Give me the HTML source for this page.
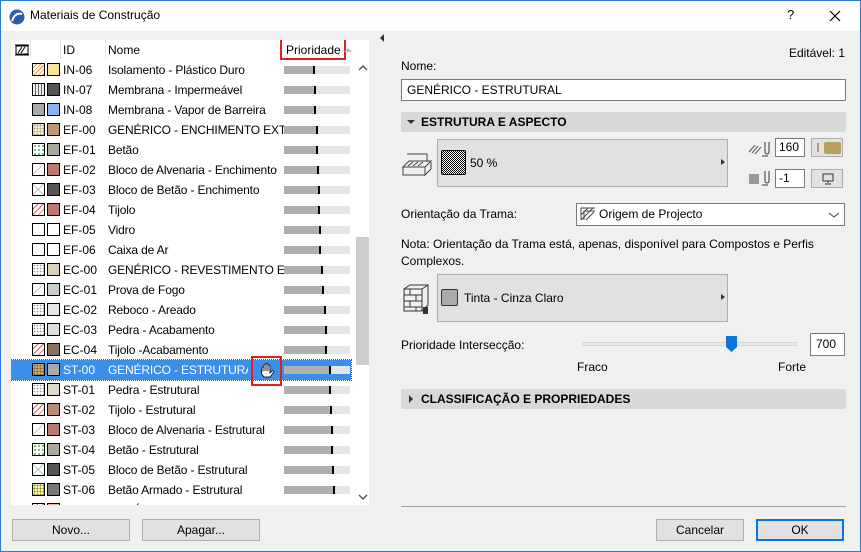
<!DOCTYPE html>
<html><head><meta charset="utf-8"><style>
*{box-sizing:border-box;margin:0;padding:0}
body{width:861px;height:552px;overflow:hidden;background:#f0f0f0;font-family:"Segoe UI","Liberation Sans",sans-serif;font-size:12px;color:#000;position:relative}
.a{position:absolute}
.win{position:absolute;left:0;top:0;width:861px;height:552px;border:1px solid #2b78d6;border-top:none}
.title{position:absolute;left:0;top:0;width:861px;height:31px;background:#fff;border-top:1px solid #2b78d6}
.list{position:absolute;left:11px;top:40px;width:358px;height:465px;background:#fff;overflow:hidden}
.row{position:absolute;left:0;width:345px;height:20px}
.row .p{position:absolute;left:21px;top:3px;width:13px;height:13px;border:1px solid #000}
.row .c{position:absolute;left:36px;top:3px;width:13px;height:13px;border:1px solid #000}
.row .id{position:absolute;left:52px;top:3px}
.row .n{position:absolute;left:97px;top:3px;width:176px;white-space:nowrap;overflow:hidden;letter-spacing:-0.15px}
.row .b{position:absolute;left:273px;top:6px;width:66px;height:8px;background:#e4e4e4}
.row .b i{position:absolute;left:0;top:0;height:8px;background:#b0b0b0;border-right:2px solid #000}
.sel{background:#3c8fe8;color:#fff;outline:1px dotted #1a5fb0}
.btn{position:absolute;height:22px;background:#e1e1e1;border:1px solid #adadad;text-align:center;line-height:20px}
.hd{position:absolute;left:401px;width:445px;height:20px;background:#d8d8d8;border-radius:2px;font-weight:bold;line-height:20px;padding-left:20px}
.inp{position:absolute;background:#fff;border:1px solid #7a7a7a;padding-left:5px;line-height:20px}
.h1{background:repeating-linear-gradient(135deg,#fff 0 2px,#e89a30 2px 3px)}
.h2{background:repeating-linear-gradient(90deg,#eee 0 2px,#666 2px 3px)}
.h3{background:repeating-linear-gradient(135deg,#fff 0 3px,#e06060 3px 4px)}
.h4{background:linear-gradient(135deg,#fff 45%,#e08050 47%,#fff 52%)}
.dt{background:radial-gradient(#999 0.6px,#fff 1px) 0 0/3px 3px}
.dg{background:radial-gradient(#4a4 0.7px,#fff 1.2px) 0 0/4px 4px}
.dy{background:radial-gradient(#880 0.8px,#ffc 1.2px) 0 0/3px 3px}
.xg{background:linear-gradient(45deg,#fff 46%,#4a4 48%,#fff 52%),linear-gradient(135deg,#fff 46%,#4a4 48%,#fff 52%);background-blend-mode:multiply}
.bg{background:radial-gradient(#b09a70 0.7px,#f0e8d8 1px) 0 0/3px 3px}
.chk{background:repeating-conic-gradient(#000 0 25%,#fff 0 50%) 0 0/2px 2px}
</style></head><body>
<div class="title">
 <svg class="a" style="left:9px;top:8px" width="16" height="16"><circle cx="8" cy="8" r="7.5" fill="#2a5db0"/><path d="M3 12 Q6 3 13 5" stroke="#fff" stroke-width="2" fill="none"/></svg>
 <div class="a" style="left:30px;top:7px;font-size:12px">Materiais de Construção</div>
 <div class="a" style="left:787px;top:6px;font-size:13px">?</div>
 <svg class="a" style="left:829px;top:9px" width="12" height="12"><path d="M1 1L11 11M11 1L1 11" stroke="#000" stroke-width="1.2"/></svg>
</div>
<div class="win"></div>

<div class="list">
 <svg class="a" style="left:4px;top:4px" width="14" height="12"><rect x="1" y="2" width="12" height="8" fill="none" stroke="#000"/><path d="M0 1h14M0 11h14M3 9l4-6M6 9l4-6" stroke="#000"/></svg>
 <div class="a" style="left:19px;top:0;width:1px;height:19px;background:#e5e5e5"></div>
 <div class="a" style="left:49px;top:0;width:1px;height:19px;background:#e5e5e5"></div>
 <div class="a" style="left:94px;top:0;width:1px;height:19px;background:#e5e5e5"></div>
 <div class="a" style="left:52px;top:3px">ID</div>
 <div class="a" style="left:97px;top:3px">Nome</div>
 <div class="a" style="left:269px;top:-3px;width:66px;height:23px;border:2px solid #e02020"></div>
 <div class="a" style="left:275px;top:3px">Prioridade</div>
 <div class="a" style="left:333px;top:8px;width:0;height:0;border:4px solid transparent;border-bottom-color:#bbb;border-top:none"></div>
 <div class="a" style="left:345px;top:19px;width:13px;height:446px;background:#fff"></div>
 <div class="a" style="left:345px;top:197px;width:13px;height:128px;background:#cdcdcd"></div>
 <svg class="a" style="left:347px;top:24px" width="10" height="8"><path d="M1 6l4-4 4 4" stroke="#555" stroke-width="1.5" fill="none"/></svg>
 <svg class="a" style="left:347px;top:453px" width="10" height="8"><path d="M1 2l4 4 4-4" stroke="#555" stroke-width="1.5" fill="none"/></svg>

 <div class="row" style="top:20px"><span class="p h1"></span><span class="c" style="background:#f5e29c"></span><span class="id">IN-06</span><span class="n">Isolamento - Plástico Duro</span><span class="b"><i style="width:31px"></i></span></div>
 <div class="row" style="top:40px"><span class="p h2"></span><span class="c" style="background:#555"></span><span class="id">IN-07</span><span class="n">Membrana - Impermeável</span><span class="b"><i style="width:32px"></i></span></div>
 <div class="row" style="top:60px"><span class="p" style="background:#aaa"></span><span class="c" style="background:#8ab0f0"></span><span class="id">IN-08</span><span class="n">Membrana - Vapor de Barreira</span><span class="b"><i style="width:32px"></i></span></div>
 <div class="row" style="top:80px"><span class="p bg"></span><span class="c" style="background:#b8977a"></span><span class="id">EF-00</span><span class="n">GENÉRICO - ENCHIMENTO EXTERIOR</span><span class="b"><i style="width:34px"></i></span></div>
 <div class="row" style="top:100px"><span class="p dg"></span><span class="c" style="background:#a8a89c"></span><span class="id">EF-01</span><span class="n">Betão</span><span class="b"><i style="width:34px"></i></span></div>
 <div class="row" style="top:120px"><span class="p h4"></span><span class="c" style="background:#b87a70"></span><span class="id">EF-02</span><span class="n">Bloco de Alvenaria - Enchimento</span><span class="b"><i style="width:35px"></i></span></div>
 <div class="row" style="top:140px"><span class="p xg"></span><span class="c" style="background:#555"></span><span class="id">EF-03</span><span class="n">Bloco de Betão - Enchimento</span><span class="b"><i style="width:36px"></i></span></div>
 <div class="row" style="top:160px"><span class="p h3"></span><span class="c" style="background:#b87a70"></span><span class="id">EF-04</span><span class="n">Tijolo</span><span class="b"><i style="width:36px"></i></span></div>
 <div class="row" style="top:180px"><span class="p"></span><span class="c"></span><span class="id">EF-05</span><span class="n">Vidro</span><span class="b"><i style="width:37px"></i></span></div>
 <div class="row" style="top:200px"><span class="p"></span><span class="c"></span><span class="id">EF-06</span><span class="n">Caixa de Ar</span><span class="b"><i style="width:37px"></i></span></div>
 <div class="row" style="top:220px"><span class="p dt"></span><span class="c" style="background:#d8d0b8"></span><span class="id">EC-00</span><span class="n">GENÉRICO - REVESTIMENTO EXTERIOR</span><span class="b"><i style="width:39px"></i></span></div>
 <div class="row" style="top:240px"><span class="p h4"></span><span class="c" style="background:#ccc"></span><span class="id">EC-01</span><span class="n">Prova de Fogo</span><span class="b"><i style="width:40px"></i></span></div>
 <div class="row" style="top:260px"><span class="p dt"></span><span class="c" style="background:#e4e4e4"></span><span class="id">EC-02</span><span class="n">Reboco - Areado</span><span class="b"><i style="width:42px"></i></span></div>
 <div class="row" style="top:280px"><span class="p dt"></span><span class="c" style="background:#ddd"></span><span class="id">EC-03</span><span class="n">Pedra - Acabamento</span><span class="b"><i style="width:43px"></i></span></div>
 <div class="row" style="top:300px"><span class="p h3"></span><span class="c" style="background:#8b7060"></span><span class="id">EC-04</span><span class="n">Tijolo -Acabamento</span><span class="b"><i style="width:43px"></i></span></div>
 <div class="row sel" style="top:320px;width:340px"><span class="p bg" style="background:radial-gradient(#806030 0.8px,#c8b080 1.2px) 0 0/3px 3px"></span><span class="c" style="background:#aaa"></span><span class="id">ST-00</span><span class="n" style="width:140px">GENÉRICO - ESTRUTURAL</span><span class="b" style="width:66px"><i style="width:47px"></i></span></div>
 <div class="row" style="top:340px"><span class="p dt"></span><span class="c" style="background:#e0d8c8"></span><span class="id">ST-01</span><span class="n">Pedra - Estrutural</span><span class="b"><i style="width:47px"></i></span></div>
 <div class="row" style="top:360px"><span class="p h3"></span><span class="c" style="background:#b88a78"></span><span class="id">ST-02</span><span class="n">Tijolo - Estrutural</span><span class="b"><i style="width:48px"></i></span></div>
 <div class="row" style="top:380px"><span class="p h4"></span><span class="c" style="background:#b87a70"></span><span class="id">ST-03</span><span class="n">Bloco de Alvenaria - Estrutural</span><span class="b"><i style="width:49px"></i></span></div>
 <div class="row" style="top:400px"><span class="p dg"></span><span class="c" style="background:#a8a89c"></span><span class="id">ST-04</span><span class="n">Betão - Estrutural</span><span class="b"><i style="width:49px"></i></span></div>
 <div class="row" style="top:420px"><span class="p xg"></span><span class="c" style="background:#555"></span><span class="id">ST-05</span><span class="n">Bloco de Betão - Estrutural</span><span class="b"><i style="width:50px"></i></span></div>
 <div class="row" style="top:440px"><span class="p dy"></span><span class="c" style="background:#777"></span><span class="id">ST-06</span><span class="n">Betão Armado - Estrutural</span><span class="b"><i style="width:51px"></i></span></div>
 <div class="row" style="top:460px"><span class="p h3"></span><span class="c" style="background:#f5b090"></span><span class="id">EM-00</span><span class="n">GENÉRICO - MEMBRANA EXTERIOR</span><span class="b"><i style="width:53px"></i></span></div>
</div>
<div class="a" style="left:251px;top:356px;width:31px;height:30px;border:2px solid #e02020"></div>
<svg class="a" style="left:258px;top:363px" width="18" height="17"><path d="M4 9V5a1 1 0 0 1 2 0v3V2a1 1 0 0 1 2 0v6V1.5a1 1 0 0 1 2 0V8V3a1 1 0 0 1 2 0v7l2-2a1 1 0 0 1 1.5 1.5L12 14H6L3.5 11V7a1 1 0 0 1 .5-1" fill="#fff" stroke="#222" stroke-width="1"/></svg>

<div class="btn" style="left:12px;top:519px;width:118px">Novo...</div>
<div class="btn" style="left:142px;top:519px;width:118px">Apagar...</div>

<div class="a" style="left:380px;top:34px;width:0;height:0;border:4px solid transparent;border-right:4px solid #333;border-left:none"></div>

<div class="a" style="right:16px;top:46px">Editável: 1</div>
<div class="a" style="left:401px;top:59px">Nome:</div>
<div class="inp" style="left:401px;top:79px;width:445px;height:22px">GENÉRICO - ESTRUTURAL</div>

<div class="hd" style="top:112px"><span class="a" style="left:6px;top:8px;border:4px solid transparent;border-top:4px solid #333;border-bottom:none"></span>ESTRUTURA E ASPECTO</div>

<svg class="a" style="left:402px;top:151px" width="30" height="26"><path d="M5 3h20v8M1 16l6-6h22l-6 6zM1 16h22v8H1zM23 16v8l6-6v-7" fill="none" stroke="#444"/><path d="M6 15l5-4M11 15l5-4M16 15l5-4" stroke="#444"/></svg>
<div class="a" style="left:437px;top:139px;width:291px;height:48px;background:#e1e1e1;border:1px solid #adadad"></div>
<div class="a chk" style="left:441px;top:150px;width:25px;height:25px;border:1px solid #000;border-radius:2px"></div>
<div class="a" style="left:470px;top:156px">50 %</div>
<div class="a" style="left:721px;top:159px;border:3px solid transparent;border-left:4px solid #333;border-right:none"></div>

<svg class="a" style="left:748px;top:140px" width="26" height="18"><path d="M1 12l6-7M4 13l6-7M7 14l6-7" stroke="#555"/><path d="M17 2v10a2 2 0 0 0 4 0V2M14 16h6" stroke="#333" fill="none"/></svg>
<div class="inp" style="left:775px;top:138px;width:30px;height:19px;line-height:17px;padding-left:3px">160</div>
<div class="a" style="left:811px;top:138px;width:32px;height:19px;background:#e1e1e1;border:1px solid #adadad"><span class="a" style="left:5px;top:4px;width:2px;height:9px;background:#b5a060"></span><span class="a" style="left:12px;top:3px;width:17px;height:12px;background:#b5a060;border-radius:2px"></span></div>
<svg class="a" style="left:748px;top:169px" width="26" height="18"><rect x="1" y="5" width="10" height="10" fill="#999"/><path d="M17 2v10a2 2 0 0 0 4 0V2M14 16h6" stroke="#333" fill="none"/></svg>
<div class="inp" style="left:775px;top:169px;width:30px;height:19px;line-height:17px;padding-left:3px">-1</div>
<div class="a" style="left:811px;top:169px;width:32px;height:19px;background:#e1e1e1;border:1px solid #adadad"><svg class="a" style="left:10px;top:3px" width="12" height="12"><rect x="1" y="1" width="10" height="7" fill="none" stroke="#333"/><path d="M6 8v2M3 11h6" stroke="#333"/></svg></div>

<div class="a" style="left:401px;top:207px">Orientação da Trama:</div>
<div class="inp" style="left:576px;top:203px;width:269px;height:23px;padding-left:22px">Origem de Projecto</div>
<svg class="a" style="left:580px;top:207px" width="16" height="14"><path d="M1 13V1h14M4 13V4h11M1 8l7-7M1 13l12-12M6 13l8-8" stroke="#444" fill="none"/></svg>
<svg class="a" style="left:828px;top:211px" width="12" height="8"><path d="M1 2l5 4 5-4" stroke="#444" fill="none"/></svg>

<div class="a" style="left:401px;top:236px;width:420px;line-height:17px">Nota: Orientação da Trama está, apenas, disponível para Compostos e Perfis Complexos.</div>

<svg class="a" style="left:402px;top:283px" width="28" height="32"><path d="M2 6h18v22H2zM20 6l6-4v20l-6 6M2 6l6-4h18M2 12h18M2 18h18M2 24h18M8 6v6M14 12v6M8 18v6M14 24v4" stroke="#333" fill="none"/><rect x="21" y="24" width="5" height="7" fill="#333"/></svg>
<div class="a" style="left:437px;top:274px;width:291px;height:48px;background:#e1e1e1;border:1px solid #adadad"></div>
<div class="a" style="left:441px;top:289px;width:17px;height:17px;border:1px solid #333;background:#aaa;border-radius:2px"></div>
<div class="a" style="left:464px;top:291px">Tinta - Cinza Claro</div>
<div class="a" style="left:721px;top:294px;border:3px solid transparent;border-left:4px solid #333;border-right:none"></div>

<div class="a" style="left:401px;top:338px">Prioridade Intersecção:</div>
<div class="a" style="left:583px;top:342px;width:214px;height:4px;background:#e7e7e7;border:1px solid #d6d6d6"></div>
<svg class="a" style="left:726px;top:336px" width="11" height="16"><path d="M0 0h11v11l-5.5 5L0 11z" fill="#0a74da"/></svg>
<div class="inp" style="left:810px;top:333px;width:35px;height:23px">700</div>
<div class="a" style="left:577px;top:360px">Fraco</div>
<div class="a" style="left:778px;top:360px">Forte</div>

<div class="hd" style="top:389px"><span class="a" style="left:8px;top:6px;border:4px solid transparent;border-left:4px solid #333;border-right:none"></span>CLASSIFICAÇÃO E PROPRIEDADES</div>

<div class="a" style="left:401px;top:506px;width:445px;height:1px;background:#a0a0a0"></div>
<div class="btn" style="left:656px;top:519px;width:88px">Cancelar</div>
<div class="btn" style="left:756px;top:519px;width:88px;border:2px solid #0a74da;line-height:18px">OK</div>
</body></html>
